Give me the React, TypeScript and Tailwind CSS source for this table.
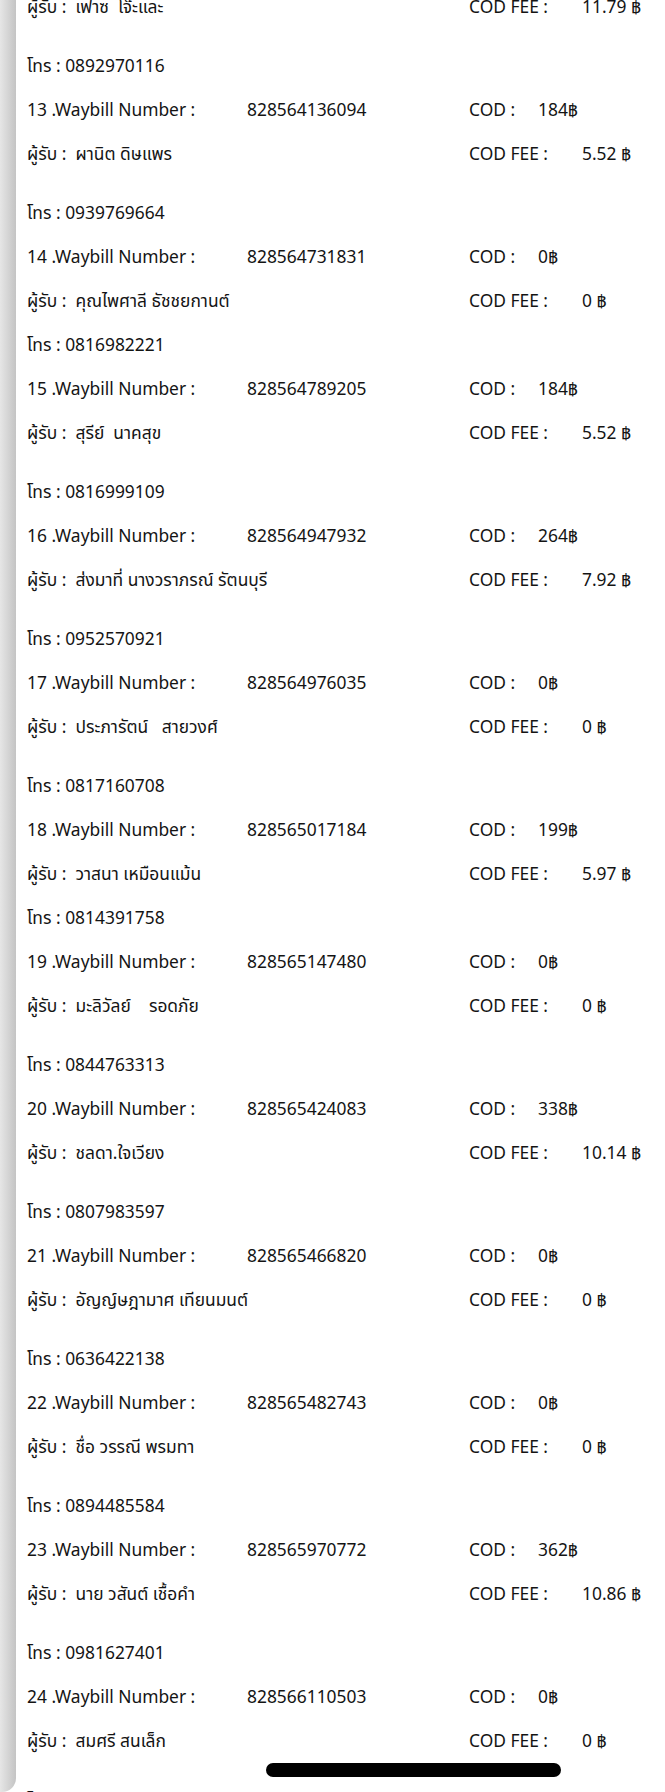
import React from "react";

type Rec = {
  no: number;
  waybill: string;
  cod: string;
  name: string;
  fee: string;
  phone: string;
  gap: boolean;
};

const records: Rec[] = [
  { no: 13, waybill: "828564136094", cod: "184", name: "ผานิต ดิษแพร", fee: "5.52", phone: "0939769664", gap: true },
  { no: 14, waybill: "828564731831", cod: "0", name: "คุณไพศาลี ธัชชยกานต์", fee: "0", phone: "0816982221", gap: false },
  { no: 15, waybill: "828564789205", cod: "184", name: "สุรีย์  นาคสุข", fee: "5.52", phone: "0816999109", gap: true },
  { no: 16, waybill: "828564947932", cod: "264", name: "ส่งมาที่ นางวราภรณ์ รัตนบุรี", fee: "7.92", phone: "0952570921", gap: true },
  { no: 17, waybill: "828564976035", cod: "0", name: "ประภารัตน์   สายวงศ์", fee: "0", phone: "0817160708", gap: true },
  { no: 18, waybill: "828565017184", cod: "199", name: "วาสนา เหมือนแม้น", fee: "5.97", phone: "0814391758", gap: false },
  { no: 19, waybill: "828565147480", cod: "0", name: "มะลิวัลย์    รอดภัย", fee: "0", phone: "0844763313", gap: true },
  { no: 20, waybill: "828565424083", cod: "338", name: "ชลดา.ใจเวียง", fee: "10.14", phone: "0807983597", gap: true },
  { no: 21, waybill: "828565466820", cod: "0", name: "อัญญ์ษฎามาศ เทียนมนต์", fee: "0", phone: "0636422138", gap: true },
  { no: 22, waybill: "828565482743", cod: "0", name: "ชื่อ วรรณี พรมทา", fee: "0", phone: "0894485584", gap: true },
  { no: 23, waybill: "828565970772", cod: "362", name: "นาย วสันต์ เชื้อคำ", fee: "10.86", phone: "0981627401", gap: true },
  { no: 24, waybill: "828566110503", cod: "0", name: "สมศรี สนเล็ก", fee: "0", phone: "0800000000", gap: true },
];

function Receiver({ name, fee }: { name: string; fee: string }) {
  return (
    <div className="flex items-center h-[44px]">
      <div className="w-[442px] whitespace-pre">ผู้รับ :  {name}</div>
      <div className="w-[113px] whitespace-pre">COD FEE :</div>
      <div className="whitespace-pre">{fee} ฿</div>
    </div>
  );
}

function Phone({ phone }: { phone: string }) {
  return <div className="flex items-center h-[44px]">โทร : {phone}</div>;
}

export default function App() {
  return (
    <div
      className="relative flex h-[1792px] overflow-hidden bg-white text-[17.4px] text-[#141414]"
      style={{ fontFamily: '"Noto Sans", "Noto Sans Thai", sans-serif' }}
    >
      {/* edge of the page behind */}
      <div className="w-[16px] shrink-0 rounded-br-[14px] bg-gradient-to-r from-[#e6e6e6] to-[#c4c4c4]" />

      <div className="flex-1 pl-[11px] -mt-[16px]">
        <Receiver name="เฟาซ  โจ๊ะและ" fee="11.79" />
        <div className="h-[15px]" />
        <Phone phone="0892970116" />

        {records.map((r) => (
          <div key={r.no}>
            <div className="flex items-center h-[44px]">
              <div className="w-[220px] whitespace-pre">{r.no} .Waybill Number :</div>
              <div className="w-[222px]">{r.waybill}</div>
              <div className="w-[69px] whitespace-pre">COD :</div>
              <div>{r.cod}฿</div>
            </div>
            <Receiver name={r.name} fee={r.fee} />
            {r.gap && <div className="h-[15px]" />}
            <Phone phone={r.phone} />
          </div>
        ))}
      </div>

      {/* home indicator */}
      <div className="absolute left-[266px] top-[1763px] h-[14px] w-[295px] rounded-full bg-black" />
    </div>
  );
}
